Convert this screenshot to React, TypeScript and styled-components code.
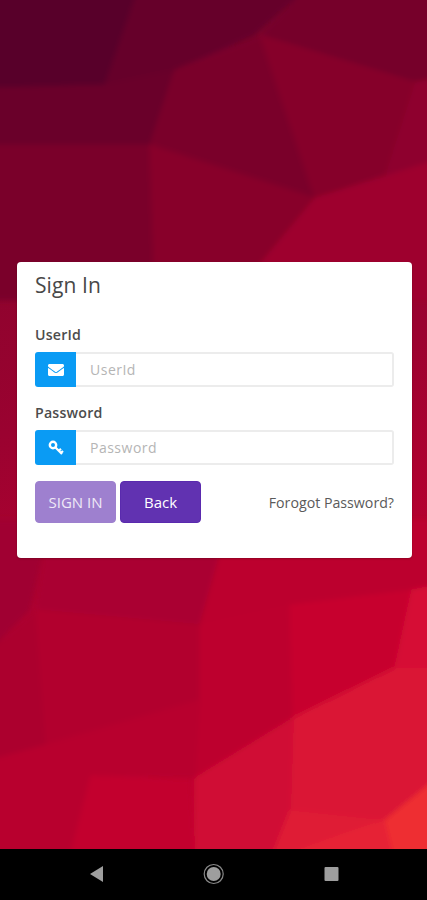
import React from "react";
import styled, { createGlobalStyle } from "styled-components";
import { FaEnvelope } from "react-icons/fa";

const Global = createGlobalStyle`
  html, body { margin: 0; padding: 0; background: #000; }
  * { box-sizing: border-box; }
  body { font-family: "Open Sans", "Noto Sans", sans-serif; }
`;

const Page = styled.div`
  width: 427px;
  height: 900px;
  display: flex;
  flex-direction: column;
  overflow: hidden;
`;

const Stage = styled.main`
  position: relative;
  height: 849px;
  padding: 262px 15px 0 17px;
  overflow: hidden;
  background: linear-gradient(165deg, #7b062a 0%, #9a0230 45%, #bf002f 75%);
`;

const Backdrop = styled.svg`
  position: absolute;
  inset: 0;
  width: 427px;
  height: 849px;
`;

const Card = styled.section`
  position: relative;
  height: 296px;
  padding: 8px 18px 0;
  background: #fff;
  border-radius: 4px;
  box-shadow: 0 1px 2px rgba(60, 0, 10, 0.35);
`;

const Title = styled.h1`
  margin: 0 0 25px;
  font-size: 21px;
  line-height: 30px;
  font-weight: 400;
  letter-spacing: 0.1px;
  color: #484848;
`;

const Field = styled.div`
  display: flex;
  flex-direction: column;
  margin-bottom: 16px;
`;

const Label = styled.label`
  height: 20px;
  margin-bottom: 7px;
  font-size: 14.2px;
  line-height: 20px;
  font-weight: 600;
  letter-spacing: 0.2px;
  color: #4c4c4c;
`;

const Group = styled.div`
  display: flex;
  height: 35px;
`;

const Addon = styled.span`
  flex: 0 0 41px;
  display: flex;
  align-items: center;
  justify-content: center;
  color: #fff;
  background: #0a9bf4;
  border-radius: 3px 0 0 3px;
`;

const Input = styled.input`
  flex: 1;
  min-width: 0;
  padding: 0 12px 0 14px;
  border: 2px solid #ececec;
  border-left: 0;
  border-radius: 0 3px 3px 0;
  outline: none;
  font: 400 14px "Open Sans", sans-serif;
  letter-spacing: 0.5px;
  &::placeholder { color: #b5b5b5; opacity: 1; }
`;

const Actions = styled.div`
  display: flex;
  align-items: center;
  gap: 4px;
  margin-top: 1px;
`;

const Button = styled.button<{ $dim?: boolean }>`
  width: 81px;
  height: 42px;
  padding: 0;
  border: 1px solid ${(p) => (p.$dim ? "#9d80ce" : "#5a2aae")};
  border-radius: 4px;
  background: ${(p) => (p.$dim ? "#9e80cf" : "#6132b1")};
  color: ${(p) => (p.$dim ? "#efe9f7" : "#fff")};
  font: 400 15px "Open Sans", sans-serif;
`;

const Forgot = styled.a`
  margin-left: auto;
  font-size: 14.2px;
  color: #5a5a5a;
`;

const NavBar = styled.nav`
  height: 51px;
  background: #000;
  display: flex;
  align-items: center;
`;

const NavIcons = styled.svg`
  width: 427px;
  height: 51px;
`;

const polys: [string, string][] = [
  ["-10,-10 138,-10 105,85 -10,88", "#58062b"],
  ["138,-10 305,-10 255,35 175,70 105,85", "#66042a"],
  ["305,-10 437,-10 437,80 415,82 260,35", "#76042a"],
  ["-10,88 105,85 175,70 150,145 -10,145", "#6a042a"],
  ["175,70 260,35 315,198 150,145", "#7a0329"],
  ["260,35 415,82 385,175 315,198", "#86022b"],
  ["415,82 437,78 437,160 385,175", "#8e012d"],
  ["-10,145 150,145 155,300 -10,300", "#7a042a"],
  ["150,145 315,198 230,300 155,300", "#88022c"],
  ["315,198 437,160 437,300 230,300", "#9e002e"],
  ["-10,520 50,520 30,610 -10,650", "#a00230"],
  ["50,520 230,520 200,625 35,610", "#aa0230"],
  ["230,520 437,520 437,590 290,605 200,625", "#bc002e"],
  ["35,610 200,625 200,700 45,745", "#b2002d"],
  ["-10,650 35,610 45,745 -10,760", "#ac012e"],
  ["200,625 290,605 293,718 195,778 200,700", "#bd002e"],
  ["290,605 412,590 395,668 293,718", "#c7042f"],
  ["412,590 437,585 437,668 395,668", "#d60f35"],
  ["293,718 395,668 437,668 437,778 385,820 290,810", "#da1335"],
  ["195,778 293,718 290,810 270,860 195,860", "#d00e34"],
  ["90,775 190,780 195,860 68,860", "#c3032e"],
  ["-10,760 45,745 200,700 195,778 90,775 68,860 -10,860", "#b8012d"],
  ["290,810 385,820 340,835 270,860", "#df1a36"],
  ["340,835 385,820 395,860 270,860", "#e62436"],
  ["385,820 437,778 437,860 395,860", "#ee2e33"],
];

export default function App() {
  return (
    <Page>
      <Global />
      <Stage>
        <Backdrop viewBox="0 0 427 849" aria-hidden="true">
          <defs>
            <filter id="soft" filterUnits="userSpaceOnUse" x="-20" y="-20" width="470" height="890">
              <feGaussianBlur stdDeviation="2.5" />
            </filter>
          </defs>
          <g filter="url(#soft)">
            {polys.map(([points, fill]) => (
              <polygon key={points} points={points} fill={fill} stroke={fill} strokeWidth={1} />
            ))}
          </g>
        </Backdrop>
        <Card>
          <Title>Sign In</Title>
          <Field>
            <Label>UserId</Label>
            <Group>
              <Addon><FaEnvelope size={16} /></Addon>
              <Input placeholder="UserId" />
            </Group>
          </Field>
          <Field>
            <Label>Password</Label>
            <Group>
              <Addon>
                <svg width="16" height="16" viewBox="0 0 16 16" fill="none" stroke="#fff" aria-hidden="true">
                  <circle cx="5" cy="5" r="3.2" strokeWidth="2.4" />
                  <path d="M7.5 7.5 L14 14 M11 10.5 L13 8.8 M13.2 12.6 L15 11" strokeWidth="2.2" />
                </svg>
              </Addon>
              <Input placeholder="Password" />
            </Group>
          </Field>
          <Actions>
            <Button $dim>SIGN IN</Button>
            <Button>Back</Button>
            <Forgot>Forogot Password?</Forgot>
          </Actions>
        </Card>
      </Stage>
      <NavBar>
        <NavIcons viewBox="0 0 427 51" aria-hidden="true">
          <polygon points="103,17 103,33 90,25" fill="#9e9e9e" />
          <circle cx="213.7" cy="25" r="9.5" fill="none" stroke="#8a8a8a" strokeWidth="1.2" />
          <circle cx="213.7" cy="25" r="7" fill="#9e9e9e" />
          <rect x="324.5" y="18" width="14" height="14" rx="1" fill="#9e9e9e" />
        </NavIcons>
      </NavBar>
    </Page>
  );
}
